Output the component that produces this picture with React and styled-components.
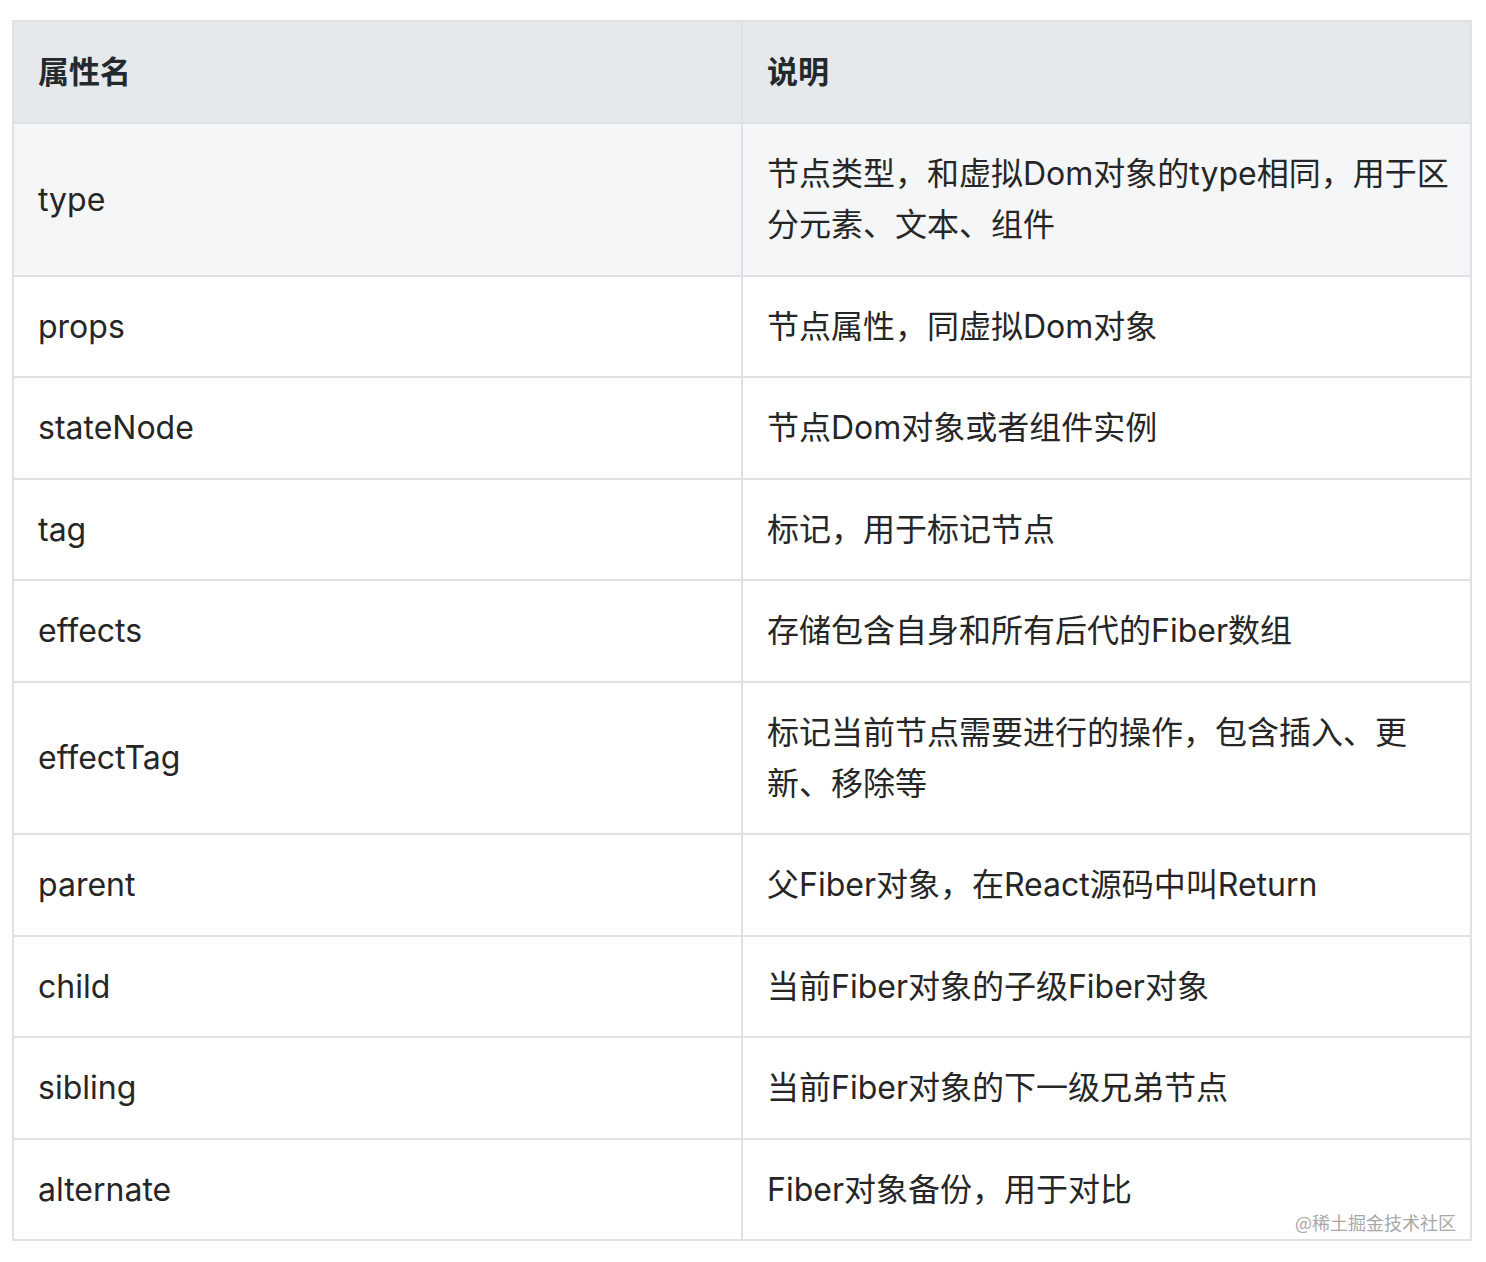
import React from 'react';
import styled, { createGlobalStyle } from 'styled-components';

/*----------  Data  ----------*/
const rows = [
  { name: 'type', desc: '节点类型，和虚拟Dom对象的type相同，用于区分元素、文本、组件', active: true },
  { name: 'props', desc: '节点属性，同虚拟Dom对象' },
  { name: 'stateNode', desc: '节点Dom对象或者组件实例' },
  { name: 'tag', desc: '标记，用于标记节点' },
  { name: 'effects', desc: '存储包含自身和所有后代的Fiber数组' },
  { name: 'effectTag', desc: '标记当前节点需要进行的操作，包含插入、更新、移除等' },
  { name: 'parent', desc: '父Fiber对象，在React源码中叫Return' },
  { name: 'child', desc: '当前Fiber对象的子级Fiber对象' },
  { name: 'sibling', desc: '当前Fiber对象的下一级兄弟节点' },
  { name: 'alternate', desc: 'Fiber对象备份，用于对比' },
];

/*=======================================
=            App Component              =
=======================================*/

const App = () => (
  <>
    <GlobalStyle />
    <Page>
      <TableWrap>
        <Table>
          <colgroup>
            <col style={{ width: '50%' }} />
            <col style={{ width: '50%' }} />
          </colgroup>
          <thead>
            <tr>
              <HeadCell>属性名</HeadCell>
              <HeadCell>说明</HeadCell>
            </tr>
          </thead>
          <tbody>
            {rows.map((row) => (
              <Row key={row.name} $active={row.active}>
                <Cell>{row.name}</Cell>
                <Cell>{row.desc}</Cell>
              </Row>
            ))}
          </tbody>
        </Table>
        <Watermark>@稀土掘金技术社区</Watermark>
      </TableWrap>
    </Page>
  </>
);

export default App;

/*=====  End of App Component  ======*/

const GlobalStyle = createGlobalStyle`
  body {
    margin: 0;
    background: #fff;
    font-family: Inter, "Noto Sans CJK SC", sans-serif;
    color: #262626;
  }
`;

const Page = styled.div`
  padding: 20px 14px 22px 12px;
`;

const TableWrap = styled.div`
  position: relative;
`;

const Table = styled.table`
  width: 100%;
  table-layout: fixed;
  border-collapse: collapse;
  border: 2px solid #dfe2e5;
  font-size: 32px;
  line-height: 51px;
`;

const HeadCell = styled.th`
  background: #e6e9eb;
  border: 2px solid #dfe2e5;
  padding: 24px 20px 25px 24px;
  text-align: left;
  font-weight: 700;
  font-size: 31px;
  color: #24292e;
`;

const Row = styled.tr`
  background: ${({ $active }) => ($active ? '#f5f6f7' : '#fff')};
`;

const Cell = styled.td`
  border: 2px solid #dfe2e5;
  padding: 24px 20px 24.5px 24px;
  vertical-align: middle;
  font-weight: 400;
`;

const Watermark = styled.div`
  position: absolute;
  right: 16px;
  bottom: 8px;
  font-size: 18px;
  line-height: 22px;
  color: #a8a8a8;
  font-family: "Noto Sans CJK SC", sans-serif;
  text-shadow: 0 0 1px #fff;
`;
